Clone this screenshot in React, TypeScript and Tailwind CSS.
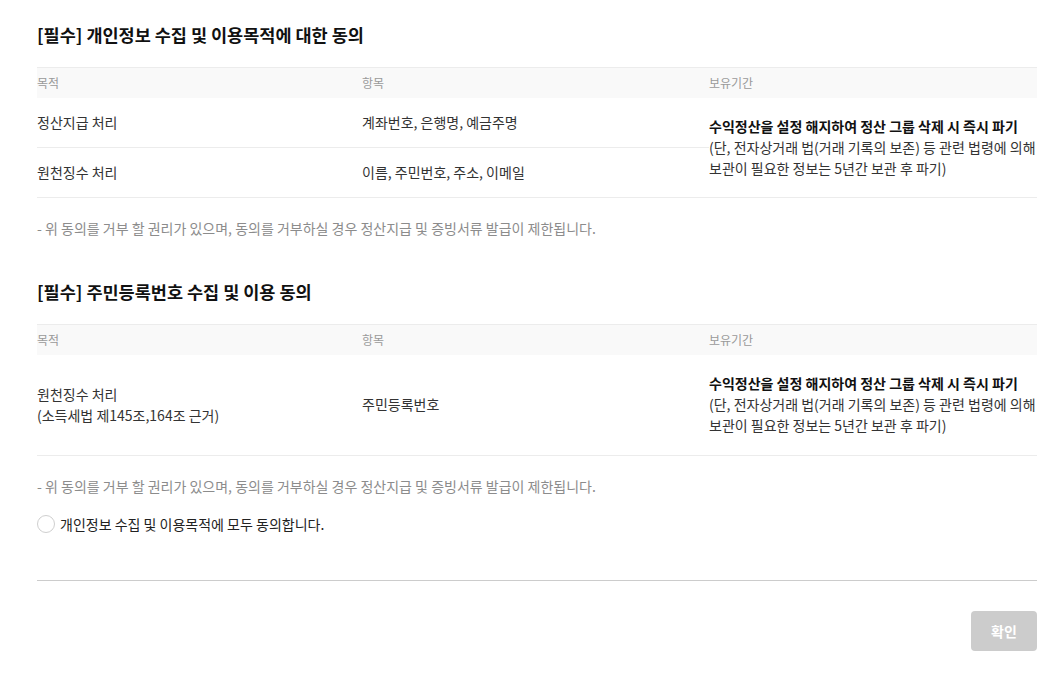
import React from "react";

const font = { fontFamily: '"Noto Sans CJK KR", "Noto Sans", sans-serif' };

function Retention() {
  return (
    <td rowSpan={2} className="align-middle text-[14px] leading-[21px] text-[#333] pl-0">
      <div className="font-bold text-[#111]">수익정산을 설정 해지하여 정산 그룹 삭제 시 즉시 파기</div>
      <div>(단, 전자상거래 법(거래 기록의 보존) 등 관련 법령에 의해</div>
      <div>보관이 필요한 정보는 5년간 보관 후 파기)</div>
    </td>
  );
}

function Header() {
  return (
    <thead>
      <tr className="bg-[#f9f9f9] border-t border-[#ececec] h-[30px] text-[12px] text-[#999] text-left">
        <th className="font-normal w-[325px] align-middle">목적</th>
        <th className="font-normal w-[347px] align-middle">항목</th>
        <th className="font-normal align-middle">보유기간</th>
      </tr>
    </thead>
  );
}

export default function App() {
  return (
    <div style={font} className="bg-white min-h-[700px] px-[37px] pt-[23px] text-[#222]">
      <div className="w-[1000px]">
        <h2 className="text-[17.5px] leading-[24px] font-bold text-[#111]">[필수] 개인정보 수집 및 이용목적에 대한 동의</h2>
        <table className="w-full mt-[20px] border-collapse">
          <Header />
          <tbody className="text-[14px] text-[#333]">
            <tr className="h-[50px] border-b border-[#ececec]">
              <td className="align-middle">정산지급 처리</td>
              <td className="align-middle">계좌번호, 은행명, 예금주명</td>
              <Retention />
            </tr>
            <tr className="h-[50px] border-b border-[#ececec]">
              <td className="align-middle">원천징수 처리</td>
              <td className="align-middle">이름, 주민번호, 주소, 이메일</td>
            </tr>
          </tbody>
        </table>
        <p className="mt-[20px] text-[14px] leading-[20px] text-[#8c8c8c]">- 위 동의를 거부 할 권리가 있으며, 동의를 거부하실 경우 정산지급 및 증빙서류 발급이 제한됩니다.</p>

        <h2 className="mt-[42px] text-[17.5px] leading-[24px] font-bold text-[#111]">[필수] 주민등록번호 수집 및 이용 동의</h2>
        <table className="w-full mt-[20px] border-collapse">
          <Header />
          <tbody className="text-[14px] text-[#333]">
            <tr className="h-[101px] border-b border-[#ececec]">
              <td className="align-middle leading-[21px]">
                <div>원천징수 처리</div>
                <div>(소득세법 제145조,164조 근거)</div>
              </td>
              <td className="align-middle">주민등록번호</td>
              <td className="align-middle text-[14px] leading-[21px] text-[#333]">
                <div className="font-bold text-[#111]">수익정산을 설정 해지하여 정산 그룹 삭제 시 즉시 파기</div>
                <div>(단, 전자상거래 법(거래 기록의 보존) 등 관련 법령에 의해</div>
                <div>보관이 필요한 정보는 5년간 보관 후 파기)</div>
              </td>
            </tr>
          </tbody>
        </table>
        <p className="mt-[20px] text-[14px] leading-[20px] text-[#8c8c8c]">- 위 동의를 거부 할 권리가 있으며, 동의를 거부하실 경우 정산지급 및 증빙서류 발급이 제한됩니다.</p>

        <label className="mt-[18px] flex items-center gap-[5px] h-[20px] text-[14px] text-[#222]">
          <span className="w-[18px] h-[18px] rounded-full border border-[#cfcfcf] bg-white" />
          <span>개인정보 수집 및 이용목적에 모두 동의합니다.</span>
        </label>

        <div className="mt-[46px] border-t border-[#cccccc]" />

        <div className="mt-[30px] flex justify-end">
          <button className="w-[66px] h-[40px] rounded-[4px] bg-[#cccccc] text-white text-[14px] font-bold">확인</button>
        </div>
      </div>
    </div>
  );
}
